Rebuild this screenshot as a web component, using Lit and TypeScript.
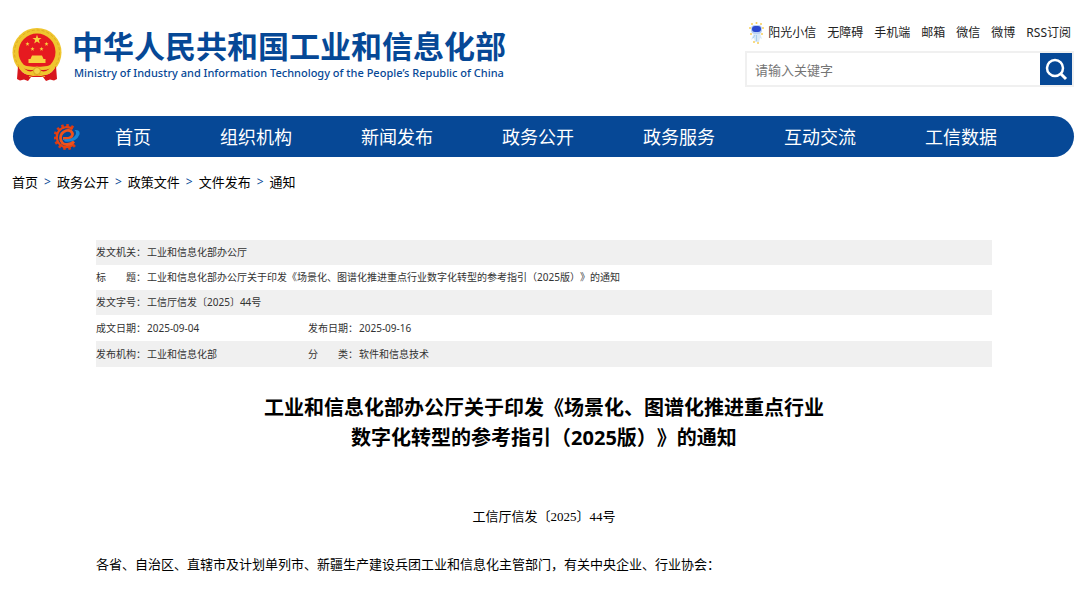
import { LitElement, html, css, svg } from "lit";
import { customElement } from "lit/decorators.js";

const STAR = "M0-1 .24-.31 .95-.31 .38 .12 .59 .81 0 .4-.59 .81-.38 .12-.95-.31-.24-.31Z";

const emblem = html`<svg class="emblem" viewBox="0 0 50 54" aria-hidden="true">
  <ellipse cx="25" cy="24.500" rx="24.500" ry="24.500" fill="#efc62f" />
  <circle cx="25" cy="24.500" r="22.500" fill="none" stroke="#e0aa20" stroke-width="1" stroke-dasharray="3 2" />
  <path d="M6 38Q9 45 16 47H34Q41 45 44 38L45 51 42 52.500 38 51.500 34 53 31 49H19L16 53 12 51.500 8 52.500 5 51Z" fill="#d8161d" />
  <ellipse cx="25" cy="24" rx="18.500" ry="18.500" fill="#e61a20" />
  <g fill="#f8d13e">
    <path d=${STAR} transform="translate(25 11.500) scale(4.800)" />
    <path d=${STAR} transform="translate(15.500 16) scale(2.200)" />
    <path d=${STAR} transform="translate(34.500 16) scale(2.200)" />
    <path d=${STAR} transform="translate(20.500 21) scale(2.200)" />
    <path d=${STAR} transform="translate(29.500 21) scale(2.200)" />
    <path d="M20 27.500h10l1.500 3.500h2v4h-17v-4h2z" />
  </g>
  <path d="M8 36Q17 39.500 25 38.500Q33 39.500 42 36L43 40Q36 49 29 46.500L25 44.500 21 46.500Q14 49 7 40Z" fill="#efc62f" />
  <path d="M12 40.500Q18 43 22 41.500Q19 46 12 40.500ZM38 40.500Q32 43 28 41.500Q31 46 38 40.500Z" fill="#d8161d" />
  <circle cx="25" cy="43" r="3.500" fill="#f5d34a" stroke="#d9a020" />
  <path d="M17 48.500Q25 46 33 48.500" fill="none" stroke="#efc62f" stroke-width="1.200" />
</svg>`;

const teeth = Array.from({ length: 11 }, (_, i) => 50 + i * 25);

const gear = html`<svg class="gear" viewBox="0 0 26 26" aria-hidden="true">
  <g fill="#dd3a12">
    ${teeth.map((a) => svg`<rect x="21.500" y="11.700" width="4" height="2.600" transform=${`rotate(${a} 12.500 13)`} />`)}
  </g>
  <path d="M19.500 20.500A10 10 0 1 1 18.500 5" fill="none" stroke="#e8420f" stroke-width="2.200" />
  <path d="M9 14.500H14Q19 13 18.500 9.500Q17 5.500 12.500 6.500Q6.500 8.500 6.500 14Q7 20.500 13 20.500Q17.500 20.500 20 17.500" fill="none" stroke="#f0521c" stroke-width="2.800" />
  <path d="M9 15Q18 16.500 21.500 11Q23 8 20.500 6Q26.500 5.500 25.500 10.500Q22 19 11 17.500Z" fill="#1a86d4" />
</svg>`;

const robot = html`<svg class="robot" viewBox="0 0 15 22" aria-hidden="true">
  <path d="M5 11h6l2 6-2-1-1 4H6l-1-4-3 2z" fill="#d9e9f7" />
  <path d="M7.500 13v6M4 16l2-3" stroke="#a9cdec" />
  <rect x="2" y="3" width="11" height="9" rx="4" fill="#bcd2f2" />
  <rect x="3" y="4" width="9" height="6" rx="3" fill="#2c49cf" />
  <g fill="#f7cf5a">
    <circle cx="3" cy="2" r="1" /><circle cx="7.500" cy="1" r="1" /><circle cx="12" cy="2" r="1" />
    <circle cx="1" cy="6" r="1" /><circle cx="14" cy="6" r="1" /><circle cx="2" cy="12" r="1" />
    <circle cx="13" cy="12" r="1" /><circle cx="5" cy="20" r="1" /><circle cx="9" cy="21" r="1" />
  </g>
</svg>`;

const TOP_LINKS = ["无障碍", "手机端", "邮箱", "微信", "微博", "RSS订阅"];
const NAV = ["首页", "组织机构", "新闻发布", "政务公开", "政务服务", "互动交流", "工信数据"];
const CRUMBS = ["首页", "政务公开", "政策文件", "文件发布", "通知"];

@customElement("app-root")
export class AppRoot extends LitElement {
  static styles = css`
    :host {
      display: block;
      background: #fff;
      color: #000;
      font-family: "Noto Sans", "Noto Sans CJK SC", sans-serif;
      text-spacing-trim: space-all;
    }
    a { color: inherit; text-decoration: none; }
    .header {
      display: flex;
      justify-content: space-between;
      align-items: flex-start;
      padding: 22px 6px 0 12px;
      height: 94px;
    }
    .brand { display: flex; gap: 10px; padding-top: 6px; color: #064896; }
    .brand-text { padding-top: 2px; }
    .emblem { width: 50px; height: 54px; }
    .brand-cn {
      display: block;
      font: 700 31px/36px "Liberation Sans", "Noto Sans CJK SC", sans-serif;
      white-space: nowrap;
    }
    .brand-en {
      display: block;
      padding-left: 2px;
      font: 500 11px/14px "Noto Sans", sans-serif;
      white-space: nowrap;
    }
    .tools { width: 329px; }
    .top-links {
      display: flex;
      justify-content: flex-end;
      align-items: center;
      gap: 11px;
      height: 22px;
      padding-right: 3px;
      font-size: 12px;
      line-height: 20px;
      color: #222;
      white-space: nowrap;
    }
    .helper { display: flex; align-items: center; gap: 4px; }
    .robot { width: 15px; height: 22px; }
    .search {
      display: flex;
      margin-top: 7px;
      border: 2px solid #f0f0f0;
      height: 32px;
    }
    .search-input {
      flex: 1;
      min-width: 0;
      border: 0;
      outline: 0;
      padding: 2px 8px 0;
      font: 13px "Noto Sans", "Noto Sans CJK SC", sans-serif;
      color: #333;
    }
    .search-input::placeholder { color: #757575; opacity: 1; }
    .search-button {
      display: grid;
      place-items: center;
      width: 32px;
      padding: 0;
      border: 0;
      background: #064896;
    }
    .search-icon { width: 24px; height: 24px; }
    .nav {
      display: flex;
      align-items: center;
      margin: 0 6px 0 13px;
      padding-left: 41px;
      height: 41px;
      border-radius: 21px;
      background: #064896;
      color: #fff;
    }
    .gear { width: 26px; height: 26px; margin-right: 35px; }
    .nav-list {
      display: flex;
      gap: 69px;
      margin: 0;
      padding: 0;
      list-style: none;
      font-size: 18px;
      line-height: 40px;
      white-space: nowrap;
    }
    .crumbs {
      display: flex;
      gap: 6px;
      padding: 15px 12px 0;
      font-size: 13px;
      line-height: 20px;
    }
    .crumb-sep { color: #064896; font-size: 12px; }
    .article { padding: 48px 88px 20px 96px; }
    .meta {
      width: 100%;
      border-collapse: collapse;
      table-layout: fixed;
      font-size: 10px;
      line-height: 25px;
      color: #333;
      text-align: left;
    }
    .meta th, .meta td { padding: 0; font-weight: 400; white-space: nowrap; }
    .meta tr:nth-child(odd) { background: #f0f0f0; }
    .meta tr:nth-child(n + 4) { line-height: 26px; }
    .col-label { width: 51px; }
    .col-value { width: 161px; }
    .title {
      margin: 26px 0 0;
      font-size: 20px;
      line-height: 30px;
      font-weight: 700;
      text-align: center;
    }
    .title-line { display: block; }
    .body {
      font: 13px/24px "Liberation Serif", "Noto Sans CJK SC", serif;
    }
    .doc-no { margin: 52px 0 0; text-align: center; }
    .lead { margin: 24px 0 0; }
  `;

  render() {
    return html`
      <header class="header">
        <a class="brand" href="#">
          ${emblem}
          <span class="brand-text">
            <span class="brand-cn">中华人民共和国工业和信息化部</span>
            <span class="brand-en">Ministry of Industry and Information Technology of the People’s Republic of China</span>
          </span>
        </a>
        <div class="tools">
          <div class="top-links">
            <a class="helper" href="#">${robot}阳光小信</a>
            ${TOP_LINKS.map((t) => html`<a href="#">${t}</a>`)}
          </div>
          <form class="search" role="search">
            <input class="search-input" type="text" aria-label="请输入关键字" placeholder="请输入关键字" />
            <button class="search-button" type="button" aria-label="搜索">
              <svg class="search-icon" viewBox="0 0 24 24" fill="none" stroke="#fff" stroke-width="2.500">
                <circle cx="11" cy="11" r="8" /><path d="M17 17l5 5" stroke-width="3" />
              </svg>
            </button>
          </form>
        </div>
      </header>
      <nav class="nav">
        ${gear}
        <ul class="nav-list">
          ${NAV.map((t) => html`<li><a href="#">${t}</a></li>`)}
        </ul>
      </nav>
      <nav class="crumbs">
        ${CRUMBS.map((t, i) => html`${i ? html`<span class="crumb-sep">&gt;</span>` : ""}<a href="#">${t}</a>`)}
      </nav>
      <main class="article">
        <table class="meta">
          <colgroup><col class="col-label" /><col class="col-value" /><col class="col-label" /><col /></colgroup>
          <tbody>
            <tr><th scope="row">发文机关：</th><td colspan="3">工业和信息化部办公厅</td></tr>
            <tr><th scope="row">标　　题：</th><td colspan="3">工业和信息化部办公厅关于印发《场景化、图谱化推进重点行业数字化转型的参考指引（2025版）》的通知</td></tr>
            <tr><th scope="row">发文字号：</th><td colspan="3">工信厅信发〔2025〕44号</td></tr>
            <tr><th scope="row">成文日期：</th><td>2025-09-04</td><th scope="row">发布日期：</th><td>2025-09-16</td></tr>
            <tr><th scope="row">发布机构：</th><td>工业和信息化部</td><th scope="row">分　　类：</th><td>软件和信息技术</td></tr>
          </tbody>
        </table>
        <h1 class="title">
          <span class="title-line">工业和信息化部办公厅关于印发《场景化、图谱化推进重点行业</span>
          <span class="title-line">数字化转型的参考指引（2025版）》的通知</span>
        </h1>
        <div class="body">
          <p class="doc-no">工信厅信发〔2025〕44号</p>
          <p class="lead">各省、自治区、直辖市及计划单列市、新疆生产建设兵团工业和信息化主管部门，有关中央企业、行业协会：</p>
        </div>
      </main>
    `;
  }
}
